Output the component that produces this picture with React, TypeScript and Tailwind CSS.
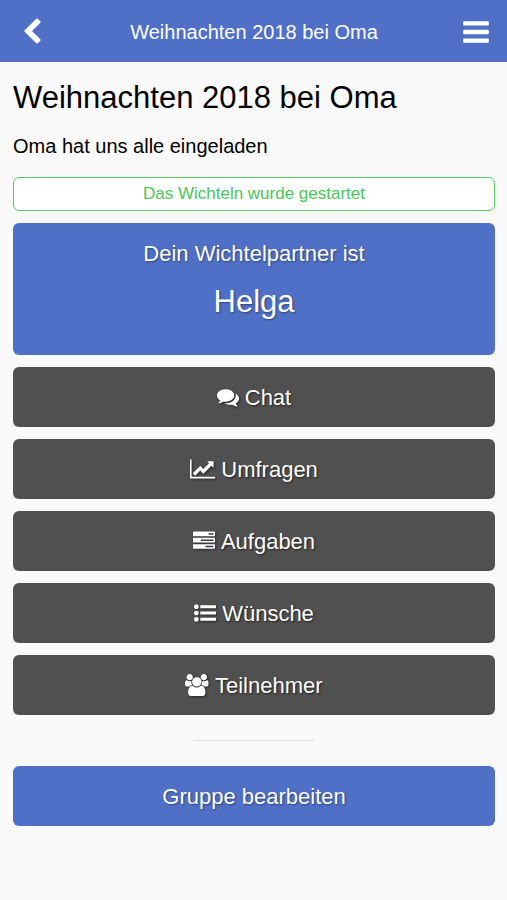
import React from "react";

type Glyph = { width: number; d: string };

const GLYPHS = {
  chevron: {
    width: 1792,
    d: "M1427 301l-531 531 531 531q19 19 19 45t-19 45l-166 166q-19 19-45 19t-45-19l-742-742q-19-19-19-45t19-45l742-742q19-19 45-19t45 19l166 166q19 19 19 45t-19 45z",
  },
  bars: {
    width: 1792,
    d: "M1664 1344v128q0 26-19 45t-45 19h-1408q-26 0-45-19t-19-45v-128q0-26 19-45t45-19h1408q26 0 45 19t19 45zm0-512v128q0 26-19 45t-45 19h-1408q-26 0-45-19t-19-45v-128q0-26 19-45t45-19h1408q26 0 45 19t19 45zm0-512v128q0 26-19 45t-45 19h-1408q-26 0-45-19t-19-45v-128q0-26 19-45t45-19h1408q26 0 45 19t19 45z",
  },
  comments: {
    width: 1792,
    d: "M1408 768q0 139-94 257t-256.5 186.5-353.5 68.5q-86 0-176-16-124 88-278 128-36 9-86 16h-3q-11 0-20.5-8t-11.5-21q-1-3-1-6.5t.5-6.5 2-6l2.5-5 3.5-5.5 4-5 4.5-5 4-4.5q5-6 23-25t26-29.5 22.5-29 25-38.5 20.5-44q-124-72-195-177t-71-224q0-139 94-257t256.5-186.5 353.5-68.5 353.5 68.5 256.5 186.5 94 257zm384 256q0 120-71 224.5t-195 176.5q10 24 20.5 44t25 38.5 22.5 29 26 29.5 23 25q1 1 4 4.5t4.5 5 4 5 3.5 5.5l2.5 5 2 6 .5 6.5-1 6.5q-3 14-13 22t-22 7q-50-7-86-16-154-40-278-128-90 16-176 16-271 0-472-132 58 4 88 4 161 0 309-45t264-129q125-92 192-212t67-254q0-77-23-152 129 71 204 178t75 230z",
  },
  chart: {
    width: 2048,
    d: "M2048 1536v128h-2048v-1536h128v1408h1920zm-128-1248v435q0 21-19.5 29.5t-35.5-7.5l-121-121-633 633q-10 10-23 10t-23-10l-233-233-416 416-192-192 585-585q10-10 23-10t23 10l233 233 464-464-121-121q-16-16-7.5-35.5t29.5-19.5h435q14 0 23 9t9 23z",
  },
  tasks: {
    width: 1792,
    d: "M1024 1408h640v-128h-640v128zm-384-512h1024v-128h-1024v128zm640-512h384v-128h-384v128zm512 832v256q0 26-19 45t-45 19h-1664q-26 0-45-19t-19-45v-256q0-26 19-45t45-19h1664q26 0 45 19t19 45zm0-512v256q0 26-19 45t-45 19h-1664q-26 0-45-19t-19-45v-256q0-26 19-45t45-19h1664q26 0 45 19t19 45zm0-512v256q0 26-19 45t-45 19h-1664q-26 0-45-19t-19-45v-256q0-26 19-45t45-19h1664q26 0 45 19t19 45z",
  },
  list: {
    width: 1792,
    d: "M384 1408q0 80-56 136t-136 56-136-56-56-136 56-136 136-56 136 56 56 136zm0-512q0 80-56 136t-136 56-136-56-56-136 56-136 136-56 136 56 56 136zm1408 416v192q0 13-9.5 22.5t-22.5 9.5h-1216q-13 0-22.5-9.5t-9.5-22.5v-192q0-13 9.5-22.5t22.5-9.5h1216q13 0 22.5 9.5t9.5 22.5zm-1408-928q0 80-56 136t-136 56-136-56-56-136 56-136 136-56 136 56 56 136zm1408 416v192q0 13-9.5 22.5t-22.5 9.5h-1216q-13 0-22.5-9.5t-9.5-22.5v-192q0-13 9.5-22.5t22.5-9.5h1216q13 0 22.5 9.5t9.5 22.5zm0-512v192q0 13-9.5 22.5t-22.5 9.5h-1216q-13 0-22.5-9.5t-9.5-22.5v-192q0-13 9.5-22.5t22.5-9.5h1216q13 0 22.5 9.5t9.5 22.5z",
  },
  users: {
    width: 1920,
    d: "M593 896q-162 5-265 128h-134q-82 0-138-40.5t-56-118.5q0-353 124-353 6 0 43.5 21t97.5 42.5 119 21.5q67 0 133-23-5 37-5 66 0 139 81 256zm1071 637q0 120-73 189.5t-194 69.5h-874q-121 0-194-69.5t-73-189.5q0-53 3.5-103.5t14-109 26.5-108.5 43-97.5 62-81 85.5-53.5 111.5-20q10 0 43 21.5t73 48 107 48 135 21.5 135-21.5 107-48 73-48 43-21.5q61 0 111.5 20t85.5 53.5 62 81 43 97.5 26.5 108.5 14 109 3.5 103.5zm-1024-1277q0 106-75 181t-181 75-181-75-75-181 75-181 181-75 181 75 75 181zm704 384q0 159-112.5 271.5t-271.5 112.5-271.5-112.5-112.5-271.5 112.5-271.5 271.5-112.5 271.5 112.5 112.5 271.5zm576 225q0 78-56 118.5t-138 40.5h-134q-103-123-265-128 81-117 81-256 0-29-5-66 66 23 133 23 59 0 119-21.5t97.5-42.5 43.5-21q124 0 124 353zm-128-609q0 106-75 181t-181 75-181-75-75-181 75-181 181-75 181 75 75 181z",
  },
} satisfies Record<string, Glyph>;

function Icon({ glyph, className }: { glyph: Glyph; className: string }) {
  return (
    <svg
      aria-hidden="true"
      viewBox={`0 0 ${glyph.width} 1792`}
      className={`w-auto shrink-0 overflow-visible fill-current ${className}`}
    >
      <path d={glyph.d} />
    </svg>
  );
}

const ACTIONS: { label: string; glyph: Glyph }[] = [
  { label: "Chat", glyph: GLYPHS.comments },
  { label: "Umfragen", glyph: GLYPHS.chart },
  { label: "Aufgaben", glyph: GLYPHS.tasks },
  { label: "Wünsche", glyph: GLYPHS.list },
  { label: "Teilnehmer", glyph: GLYPHS.users },
];

export default function App() {
  return (
    <div className="min-h-screen bg-[#f9f9f9] font-['Helvetica_Neue','Liberation_Sans',Arial,sans-serif] text-black">
      <header className="flex h-[62px] items-center justify-between bg-[#4f70c6] pt-[2px] pr-[15px] pl-4 text-white">
        <button type="button" aria-label="Zurück" className="flex w-8 justify-center">
          <Icon glyph={GLYPHS.chevron} className="h-7" />
        </button>
        <div className="text-xl leading-6">Weihnachten 2018 bei Oma</div>
        <button type="button" aria-label="Menü" className="flex w-8 justify-center">
          <Icon glyph={GLYPHS.bars} className="h-[30px]" />
        </button>
      </header>

      <main className="pt-4 pr-3 pl-[13px]">
        <h1 className="text-[31px] leading-10">Weihnachten 2018 bei Oma</h1>
        <p className="mt-4 text-xl leading-6">Oma hat uns alle eingeladen</p>

        <div className="mt-[19px] flex h-[34px] items-center justify-center rounded-md border border-[#5cc968] bg-white text-[17px] text-[#4cc558]">
          Das Wichteln wurde gestartet
        </div>

        <section className="mt-3 h-[132px] rounded-md bg-[#4f70c6] pt-[19px] text-center text-white text-shadow-[1px_1px_2px_rgb(0_0_0/0.4)]">
          <p className="text-[22px] leading-6">Dein Wichtelpartner ist</p>
          <p className="mt-4 text-[31px] leading-10">Helga</p>
        </section>

        <nav className="mt-3 flex flex-col gap-3">
          {ACTIONS.map(({ label, glyph }) => (
            <button
              key={label}
              type="button"
              className="flex h-[60px] items-center justify-center gap-[6px] rounded-md bg-[#505050] text-[22px] text-white text-shadow-[1px_1px_2px_rgb(0_0_0/0.6)]"
            >
              <Icon glyph={glyph} className="h-[22px] drop-shadow-[1px_1px_1px_rgb(0_0_0/0.5)]" />
              {label}
            </button>
          ))}
        </nav>

        <hr className="mx-auto mt-[25px] w-1/4 border-[#dcdcdc]" />

        <button
          type="button"
          className="mt-[25px] h-[60px] w-full rounded-md bg-[#4f70c6] text-[22px] text-white text-shadow-[1px_1px_2px_rgb(0_0_0/0.4)]"
        >
          Gruppe bearbeiten
        </button>
      </main>
    </div>
  );
}
